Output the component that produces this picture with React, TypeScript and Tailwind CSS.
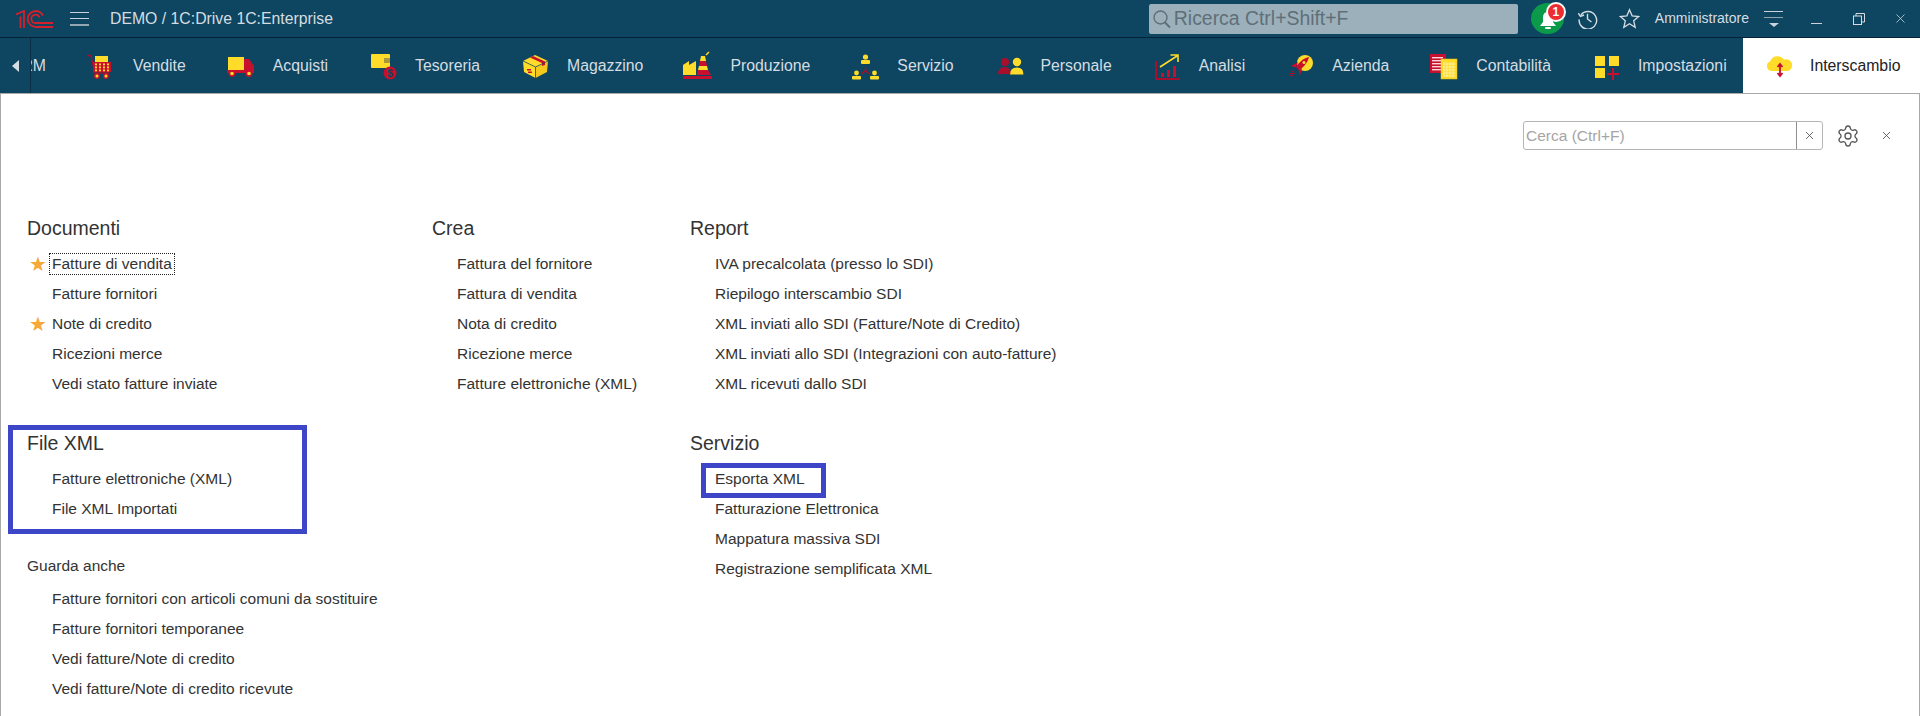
import { ReactNode } from 'react'
import { Settings, X } from 'lucide-react'

const Y = '#ffdc29'
const R = '#c8102e'
const D = '#a80f2c'

function Ico({ children }: { children: ReactNode }) {
  return (
    <svg viewBox="0 0 28 28" className="w-[28px] h-[28px] shrink-0 overflow-visible">
      {children}
    </svg>
  )
}

function CartIcon() {
  return (
    <Ico>
      <rect x="6" y="4" width="13" height="6" fill={Y} />
      <path d="M-2 3 L2 4 L6 21 H20" fill="none" stroke={D} strokeWidth="1.4" />
      <rect x="4" y="10" width="18" height="10" fill={R} />
      {[6, 10, 14, 18].map((x) =>
        [11.5, 14.5, 17.5].map((y) => <rect key={x + '-' + y} x={x} y={y} width="2" height="1.8" fill={Y} />)
      )}
      <circle cx="8" cy="24" r="2.2" fill={Y} stroke={R} strokeWidth="1.4" />
      <circle cx="17" cy="24" r="2.2" fill={Y} stroke={R} strokeWidth="1.4" />
    </Ico>
  )
}

function TruckIcon() {
  return (
    <Ico>
      <rect x="-1" y="5" width="16" height="14" fill={Y} />
      <path d="M15 7 h5 l5 7 v5 H15z" fill={R} />
      <rect x="-2" y="18" width="27" height="3" fill={R} />
      <circle cx="3" cy="21.5" r="2.6" fill={Y} stroke={R} strokeWidth="1.6" />
      <circle cx="20" cy="21.5" r="2.6" fill={Y} stroke={R} strokeWidth="1.6" />
    </Ico>
  )
}

function WalletIcon() {
  return (
    <Ico>
      <rect x="0" y="2" width="19" height="14" rx="1" fill={Y} />
      <rect x="13" y="6" width="6" height="5" fill="#a89a3a" />
      <circle cx="19" cy="21" r="6.5" fill={R} />
      <text x="19" y="24.5" textAnchor="middle" fontSize="10" fontWeight="700" fill="#0e4560" fontFamily="Liberation Sans">
        $
      </text>
    </Ico>
  )
}

function BoxIcon() {
  return (
    <Ico>
      <polygon points="0,9 12.5,15 12.5,26 1,20" fill={Y} />
      <polygon points="25,9 12.5,15 12.5,26 24,20" fill="#f4c91c" />
      <polygon points="12,3 25,9 12.5,15 0,9" fill={Y} />
      <polygon points="7,5.5 10,4 22,9.5 22,13 19,14 19,11" fill={R} />
      <path d="M0 9 L12.5 15 L25 9 M12.5 15 V26" fill="none" stroke="#0e4560" strokeWidth="0.7" />
      <rect x="4" y="17" width="4" height="1.5" fill={R} />
      <rect x="5" y="19.5" width="4" height="1.5" fill={R} />
    </Ico>
  )
}

function FactoryIcon() {
  return (
    <Ico>
      <path d="M-3 23 V13 L3 9 V13 L10 9 V23Z" fill={Y} />
      <polygon points="15,4 19,4 20,9 14,9" fill={Y} />
      <polygon points="14,9 20,9 21,14 13,14" fill={R} />
      <polygon points="13,14 21,14 22,18 12,18" fill={Y} />
      <polygon points="12,18 22,18 25,23 11,23" fill={R} />
      <rect x="-3" y="24" width="29" height="3" fill={R} />
      <path d="M20 3 L23 0" stroke={Y} strokeWidth="1.4" />
    </Ico>
  )
}

function ServiceIcon() {
  return (
    <Ico>
      <circle cx="12.5" cy="5" r="2.6" fill={Y} />
      <rect x="8" y="8" width="9" height="4" rx="1" fill={Y} />
      <circle cx="3.5" cy="21" r="2.4" fill={Y} />
      <rect x="-1" y="24" width="9" height="3.5" rx="1" fill={Y} />
      <circle cx="21.5" cy="21" r="2.4" fill={Y} />
      <rect x="17" y="24" width="9" height="3.5" rx="1" fill={Y} />
      <path d="M12.5 15 V19 M12.5 18.5 L8.5 22 M12.5 18.5 L16.5 22" stroke={D} strokeWidth="1.4" fill="none" />
    </Ico>
  )
}

function PeopleIcon() {
  return (
    <Ico>
      <circle cx="8" cy="10" r="4" fill={D} />
      <path d="M1 22 q0 -7 7 -7 q6 0 6 7z" fill={D} />
      <circle cx="20" cy="10" r="4.2" fill={Y} />
      <path d="M13 22.5 q0 -7 7 -7 q6.5 0 6.5 7z" fill={Y} />
    </Ico>
  )
}

function ChartIcon() {
  return (
    <Ico>
      <path d="M1 9 V27 H25" fill="none" stroke={D} strokeWidth="2" />
      <rect x="6" y="21" width="3" height="4" fill={R} />
      <rect x="12" y="18" width="3" height="7" fill={R} />
      <rect x="18" y="14" width="3" height="11" fill={R} />
      <path d="M5 15 L22 4 M15.5 3 H23 V10" fill="none" stroke={Y} strokeWidth="1.6" />
    </Ico>
  )
}

function RocketIcon() {
  return (
    <Ico>
      <circle cx="17" cy="11" r="8" fill={Y} />
      <path d="M21 5 C16 6 11 10 8 15 L11 18 C16 15 20 10 21 5Z" fill={R} />
      <path d="M10 10 L3 14 L8 15.5Z M14 16 L12 23 L10.5 17.5Z" fill={R} />
      <path d="M6 18 L1 23 M8 20 L3 25 M5 21 L2 24" stroke={D} strokeWidth="1" />
      <circle cx="16" cy="10.5" r="1.5" fill={Y} />
    </Ico>
  )
}

function LedgerIcon() {
  return (
    <Ico>
      <rect x="-2" y="2" width="16" height="19" fill={R} />
      {[5, 8, 11, 14, 17].map((y) => (
        <rect key={y} x="0" y={y} width="11" height="1.4" fill="#fbd5da" />
      ))}
      <rect x="9" y="7" width="16" height="20" fill={Y} stroke="#e8c21a" strokeWidth="0.5" />
      {[12, 15, 18, 21].map((x) => (
        <path key={x} d={`M${x} 10 V25`} stroke="#fff3b0" strokeWidth="0.8" />
      ))}
      {[12, 15, 18, 21, 24].map((y) => (
        <path key={y} d={`M11 ${y} H23`} stroke="#fff3b0" strokeWidth="0.8" />
      ))}
    </Ico>
  )
}

function SettingsTilesIcon() {
  return (
    <Ico>
      <rect x="1" y="4" width="10" height="10" fill={Y} />
      <rect x="15" y="4" width="10" height="10" fill={Y} />
      <rect x="1" y="16" width="10" height="10" fill={Y} />
      <path d="M19 16 V28 M13 22 H25" stroke={R} strokeWidth="2" />
    </Ico>
  )
}

function CloudIcon() {
  return (
    <Ico>
      <path d="M6 19 a5 5 0 0 1 -1 -9.5 a8 8 0 0 1 14 -2 a6 6 0 0 1 4 11.5z" fill={Y} />
      <path d="M15 12 V24 M12.5 15 L15 12 L17.5 15 M12.5 21 L15 24 L17.5 21" fill="none" stroke={R} strokeWidth="1.8" />
    </Ico>
  )
}

function Logo() {
  return (
    <svg viewBox="0 0 37 18" className="w-[37px] h-[18px] ml-[16px] shrink-0" fill="none" stroke="#d3202c" strokeWidth="1.8">
      <path d="M0 4.5 L8 1 V18 M3.5 8 L4.5 7.5 V18" />
      <path d="M27 5.5 A8 8 0 1 0 20 17 H37" />
      <path d="M23.5 7.5 A4.2 4.2 0 1 0 20 13 H37" />
    </svg>
  )
}

const tabs: { label: string; icon: ReactNode }[] = [
  { label: 'Vendite', icon: <CartIcon /> },
  { label: 'Acquisti', icon: <TruckIcon /> },
  { label: 'Tesoreria', icon: <WalletIcon /> },
  { label: 'Magazzino', icon: <BoxIcon /> },
  { label: 'Produzione', icon: <FactoryIcon /> },
  { label: 'Servizio', icon: <ServiceIcon /> },
  { label: 'Personale', icon: <PeopleIcon /> },
  { label: 'Analisi', icon: <ChartIcon /> },
  { label: 'Azienda', icon: <RocketIcon /> },
  { label: 'Contabilità', icon: <LedgerIcon /> },
  { label: 'Impostazioni', icon: <SettingsTilesIcon /> },
]

function TopBar() {
  return (
    <div className="flex items-center h-[38px] border-b border-[#06233a] text-[#d5dde2]">
      <Logo />
      <div className="ml-[17px] w-[19px] flex flex-col gap-[5px] shrink-0">
        <div className="h-px bg-[#c9d3d9]" />
        <div className="h-px bg-[#c9d3d9]" />
        <div className="h-[2px] bg-[#93a6b1]" />
      </div>
      <span className="ml-[21px] text-[15.8px]">DEMO / 1C:Drive 1C:Enterprise</span>
      <div className="ml-auto flex items-center h-[30px] w-[369px] bg-[#9bb0bb] rounded-[2px] pl-[3px] text-[19.4px] text-[#5f6f78]">
        <svg viewBox="0 0 20 20" className="w-[20px] h-[22px] shrink-0" fill="none" stroke="#5f6f78" strokeWidth="1.4">
          <circle cx="8.5" cy="8.5" r="6.5" />
          <path d="M13 13.5 L18 18.5" strokeWidth="2" />
        </svg>
        <span className="ml-[2px]">Ricerca Ctrl+Shift+F</span>
      </div>
      <div className="relative ml-[13px] w-[33px] h-[31px] rounded-[50%] bg-[#0a9a4a] shrink-0">
        <svg viewBox="0 0 20 20" className="absolute left-[7px] top-[7px] w-[20px] h-[20px]" fill="#fff">
          <path d="M10 2 C6 2 5 5 5 8 V12 L2 16 H18 L15 12 V8 C15 5 14 2 10 2Z" />
          <rect x="7" y="17" width="6" height="2" rx="1" />
        </svg>
        <div className="absolute -top-[1px] left-[15px] w-[20px] h-[20px] rounded-full bg-[#ee2b2f] border-2 border-white flex items-center justify-center text-white text-[12px] font-bold">
          1
        </div>
      </div>
      <svg viewBox="0 0 24 24" className="ml-[13px] w-[21px] h-[21px] shrink-0" fill="none" stroke="#d5dde2" strokeWidth="1.6">
        <path d="M4.5 8 A10 10 0 1 1 2.5 13" />
        <path d="M1.5 6 L4 9.5 L8 8" />
        <path d="M12 6.5 V12.5 L16.5 16" />
      </svg>
      <svg viewBox="0 0 24 24" className="ml-[21px] w-[21px] h-[21px] shrink-0" fill="none" stroke="#d5dde2" strokeWidth="1.5">
        <path d="M12 2 L15 9 L22.5 9.7 L16.8 14.6 L18.5 22 L12 18 L5.5 22 L7.2 14.6 L1.5 9.7 L9 9Z" />
      </svg>
      <span className="ml-[15px] text-[14px]">Amministratore</span>
      <div className="ml-[15px] w-[19px] flex flex-col items-center gap-[5px] shrink-0">
        <div className="h-px w-full bg-[#c9d3d9]" />
        <div className="h-px w-full bg-[#8fa3ae]" />
        <div className="w-0 h-0 border-x-[5px] border-x-transparent border-t-[4px] border-t-[#c9d3d9]" />
      </div>
      <div className="ml-[28px] w-[11px] h-px bg-[#c9d3d9] mt-[10px] shrink-0" />
      <svg viewBox="0 0 12 12" className="ml-[31px] w-[12px] h-[12px] shrink-0" fill="none" stroke="#d5dde2">
        <rect x="0.5" y="3" width="8" height="8.5" />
        <path d="M3 3 V0.5 H11.5 V9 H8.5" />
      </svg>
      <X className="ml-[28px] mr-[12px] w-[15px] h-[15px] shrink-0" strokeWidth={1.2} />
    </div>
  )
}

function TabBar() {
  return (
    <div className="flex h-[55px] text-[15.8px] text-[#d5dde2]">
      <div className="w-[31px] border-r border-[#0a2f47] flex items-center justify-center pl-px shrink-0">
        <div className="w-0 h-0 border-y-[6px] border-y-transparent border-r-[7px] border-r-[#d5dde2]" />
      </div>
      <div className="flex items-center gap-[43px] min-w-0">
        <div className="w-[15px] flex justify-end overflow-hidden shrink-0">
          <span>CRM</span>
        </div>
        {tabs.map((t) => (
          <div key={t.label} className="flex items-center gap-[16px] whitespace-nowrap">
            {t.icon}
            <span>{t.label}</span>
          </div>
        ))}
      </div>
      <div className="ml-auto w-[177px] bg-white text-[#222] flex items-center gap-[17px] pl-[22px] whitespace-nowrap">
        <CloudIcon />
        <span>Interscambio</span>
      </div>
    </div>
  )
}

function Heading({ children }: { children: ReactNode }) {
  return <div className="h-[30px] leading-[30px] text-[19.5px] text-[#333]">{children}</div>
}

function Item({ children, star }: { children: ReactNode; star?: boolean }) {
  return (
    <div className="h-[30px] flex items-center">
      <div className="w-[25px] shrink-0 flex justify-start pl-[2px]">
        {star && <span className="text-[#f5a93a] text-[20px] leading-none">★</span>}
      </div>
      {children}
    </div>
  )
}

function Section({ items }: { items: string[] }) {
  return (
    <div className="mt-[6px]">
      {items.map((i) => (
        <Item key={i}>{i}</Item>
      ))}
    </div>
  )
}

function Annotation({ className }: { className: string }) {
  return <div className={'absolute border-[5px] border-[#3e46c8] pointer-events-none ' + className} />
}

function Menu() {
  return (
    <div className="flex pl-[26px] mt-[62px] text-[15.5px] text-[#333] whitespace-nowrap">
      <div className="w-[405px] shrink-0">
        <Heading>Documenti</Heading>
        <div className="mt-[6px]">
          <Item star>
            <span className="outline-1 outline-dotted outline-[#222] px-[2px] -mx-[2px] leading-[20px]">Fatture di vendita</span>
          </Item>
          <Item>Fatture fornitori</Item>
          <Item star>Note di credito</Item>
          <Item>Ricezioni merce</Item>
          <Item>Vedi stato fatture inviate</Item>
        </div>

        <div className="relative mt-[29px]">
          <Annotation className="-left-[19px] -top-[3px] w-[299px] h-[109px]" />
          <Heading>File XML</Heading>
          <Section items={['Fatture elettroniche (XML)', 'File XML Importati']} />
        </div>

        <div className="mt-[27px] h-[30px] leading-[30px]">Guarda anche</div>
        <div className="mt-[3px]">
          <Item>Fatture fornitori con articoli comuni da sostituire</Item>
          <Item>Fatture fornitori temporanee</Item>
          <Item>Vedi fatture/Note di credito</Item>
          <Item>Vedi fatture/Note di credito ricevute</Item>
        </div>
      </div>

      <div className="w-[258px] shrink-0">
        <Heading>Crea</Heading>
        <Section items={['Fattura del fornitore', 'Fattura di vendita', 'Nota di credito', 'Ricezione merce', 'Fatture elettroniche (XML)']} />
      </div>

      <div>
        <Heading>Report</Heading>
        <Section
          items={[
            'IVA precalcolata (presso lo SDI)',
            'Riepilogo interscambio SDI',
            'XML inviati allo SDI (Fatture/Note di Credito)',
            'XML inviati allo SDI (Integrazioni con auto-fatture)',
            'XML ricevuti dallo SDI',
          ]}
        />

        <div className="mt-[29px]">
          <Heading>Servizio</Heading>
          <div className="relative mt-[6px]">
            <Annotation className="left-[11px] -top-[1px] w-[125px] h-[35px]" />
            <Item>Esporta XML</Item>
            <Item>Fatturazione Elettronica</Item>
            <Item>Mappatura massiva SDI</Item>
            <Item>Registrazione semplificata XML</Item>
          </div>
        </div>
      </div>
    </div>
  )
}

export default function App() {
  return (
    <div className="h-[716px] overflow-hidden flex flex-col bg-[#0e4560] font-['Liberation_Sans',sans-serif]">
      <TopBar />
      <TabBar />
      <div className="flex-1 bg-white border border-[#a8a8a8] border-b-0 min-h-0">
        <div className="flex items-center justify-end mt-[26px] h-[31px] text-[#555]">
          <div className="flex h-[29px] w-[300px] border border-[#b5b5b5] rounded-[3px]">
            <span className="flex-1 pl-[2px] leading-[27px] text-[15.5px] text-[#a5a5a5]">Cerca (Ctrl+F)</span>
            <div className="w-[26px] border-l border-[#8f8f8f] flex items-center justify-center">
              <X className="w-[13px] h-[13px]" strokeWidth={1.6} />
            </div>
          </div>
          <Settings className="ml-[13px] w-[24px] h-[24px]" strokeWidth={1.3} />
          <X className="ml-[20px] mr-[26px] w-[13px] h-[13px]" strokeWidth={1.6} />
        </div>
        <Menu />
      </div>
    </div>
  )
}
